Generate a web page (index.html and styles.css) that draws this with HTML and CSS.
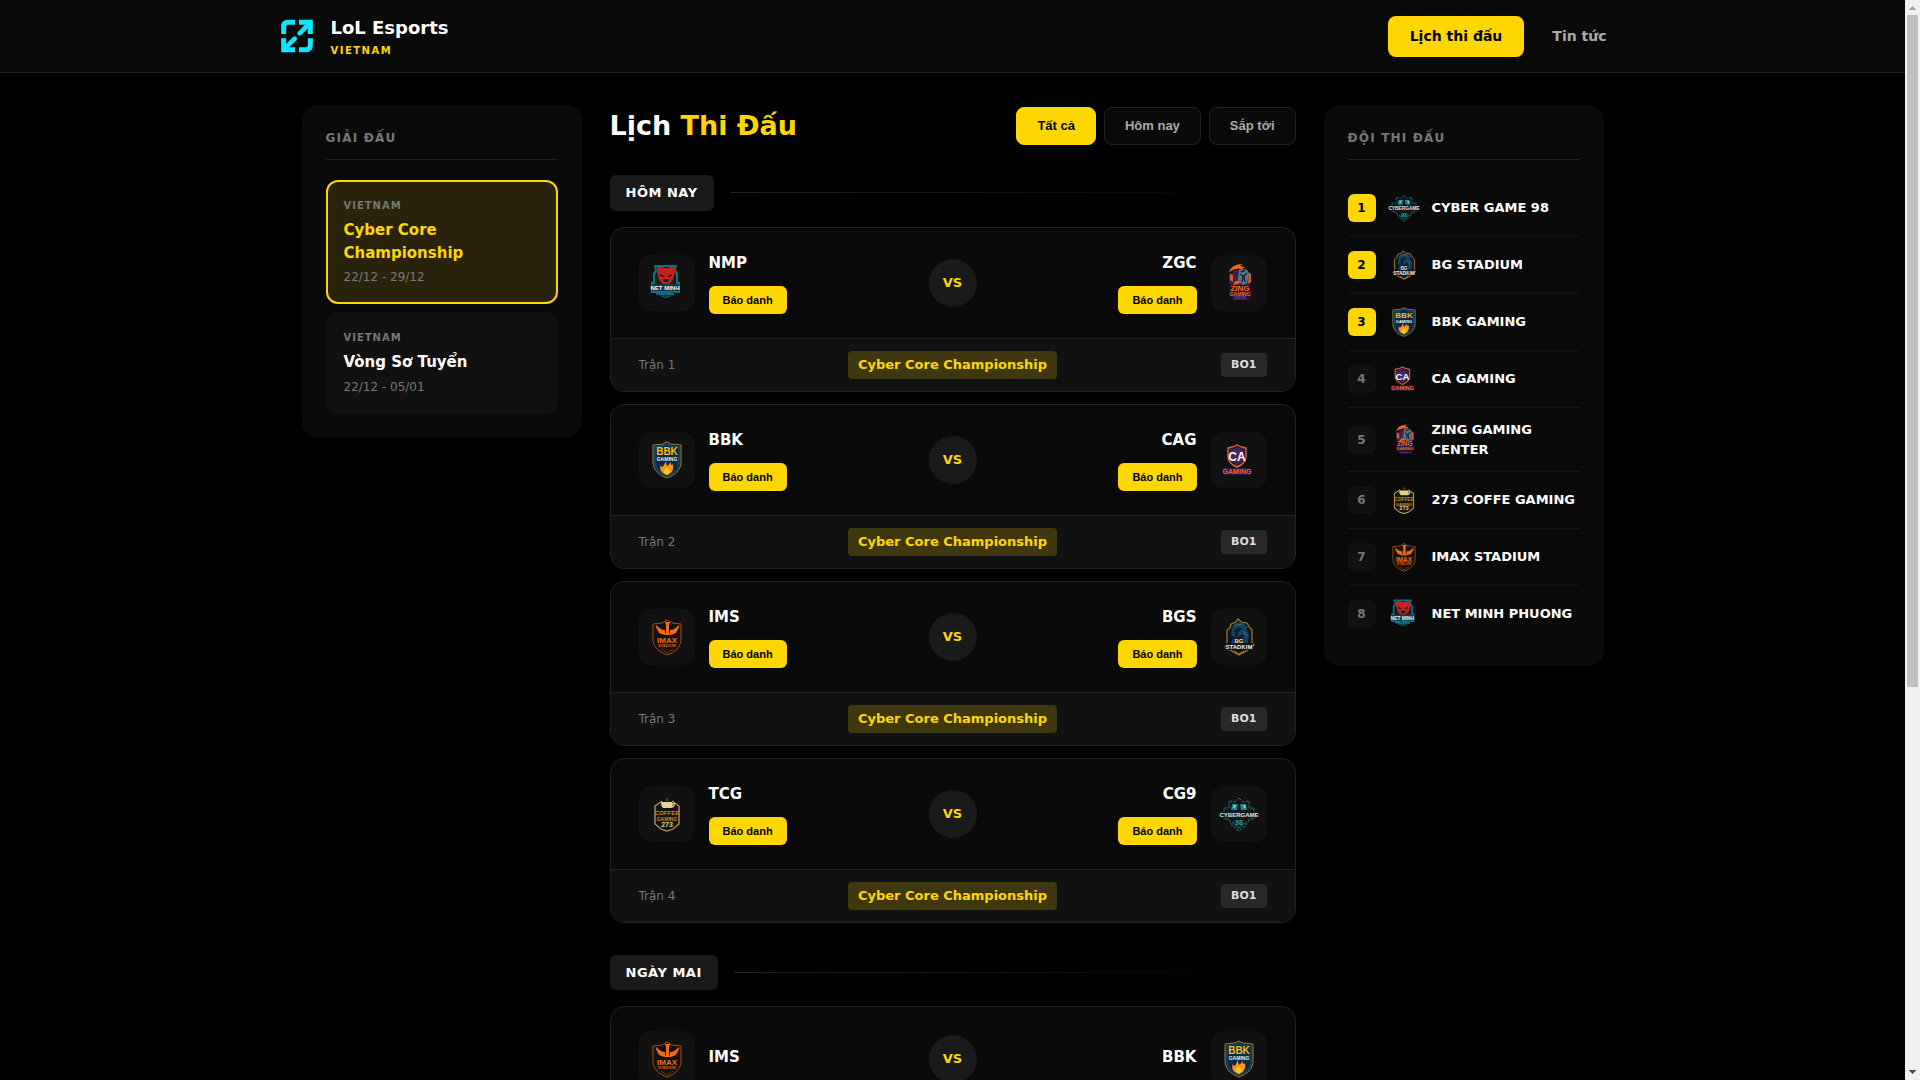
FILE: index.html
```html
<!DOCTYPE html>
<html lang="vi">
<head>
<meta charset="utf-8">
<meta name="viewport" content="width=device-width, initial-scale=1">
<title>LoL Esports Vietnam</title>
<link rel="stylesheet" href="styles.css">
</head>
<body>
<svg class="sprite" aria-hidden="true">
  <symbol id="nmp" viewBox="0 0 40 40">
    <path d="M7 2h23l-1 5 2 3v9h2v11h-7l-2 3-5 2-6-2-2-3H4V19h2v-9l2-3z" fill="#0b7383"/>
    <path d="M9 4h19l-1 4 2 4v9H8v-9l2-4z" fill="#101c2a"/>
    <path d="M10 4h4l4 1h2l4-1h4v5l-2 8-4 4h-6l-4-4-2-8z" fill="#c81f1f"/>
    <path d="M13 11l4 2v1l-4-1zM25 11l-4 2v1l4-1zM16 16h6l-1 3h-4z" fill="#181522"/>
    <path d="M14 19l3 2h4l3-2-1 1h-8z" fill="#842a35"/>
    <path d="M5 21h27v7H5z" fill="#123844"/>
    <path d="M9 29h19v3l-9 2-10-2z" fill="#0d3441"/>
    <text x="18" y="27" font-size="6" fill="#f2f7f8" class="crest">NET MINH</text>
    <text x="18" y="32" font-size="4" fill="#15a0b4" class="crest">PHUONG</text>
  </symbol>
  <symbol id="zgc" viewBox="0 0 40 40">
    <path d="M10 10h4V7h14l4 4v9l-3 3v2l4 2v5l-4 5H15l-5-5v-5l3-3-3-5z" fill="#382151"/>
    <path d="M11 11l3 1v7l-3-2zM30 10l2 1v8l-3 2z" fill="#df5b1c"/>
    <path d="M10 9c2-5 6-8 14-8l-3 2 5 1-3 2c-5-1-8 0-13 3z" fill="#f4641b"/>
    <path d="M20 7c5-3 10 0 10 5l-2 8-4 2-5-5z" fill="#5c7788"/>
    <path d="M21 11l3 2-1 6M28 10l-3 3 1 6M22 9l4-2" fill="none" stroke="#162230" stroke-width="1.4"/>
    <path d="M15 20c2-3 4-3 7 0l-8 2z" fill="#f4641b"/>
    <path d="M12 22h19l2 6v4l-4 4H14l-4-4v-4z" fill="#221433"/>
    <text x="21" y="28" font-size="8" fill="#f26b21" class="crest">ZING</text>
    <text x="21" y="33" font-size="5" fill="#f26b21" class="crest">GAMING</text>
    <text x="21" y="36" font-size="3" fill="#7c4aa5" class="crest">CENTER</text>
  </symbol>
  <symbol id="bbk" viewBox="0 0 40 40">
    <path d="M20 2l4 2 10 1v17c0 8-6 13-14 16C12 35 6 30 6 22V5l10-1z" fill="#082a46" stroke="#a97825"/>
    <path d="M20 4l4 2 8 1v15c0 7-5 11-12 14C13 33 8 29 8 22V7l8-1z" fill="none" stroke="#12577b"/>
    <text x="20" y="15" font-size="10" fill="#f6bd17" class="crest">BBK</text>
    <text x="20" y="21" font-size="5" fill="#e9eef0" class="crest">GAMING</text>
    <path d="M14 24c-1 3 2 4 3 1l2-4c0 5 2 6 3 3l2-2c-1 3 1 4 2 2 1 6-1 9-6 11-6-2-8-5-6-11z" fill="#ff9417"/>
    <path d="M20 27l-3 4 3 3 3-3-1-3-1 2z" fill="#ffd21f"/>
    <path d="M17 33l1-4 2 3 2-4 1 4-3 3z" fill="#ffc41c"/>
  </symbol>
  <symbol id="cag" viewBox="0 0 40 40">
    <path d="M18 5c3 2 6 2 9 3v9c0 5-4 8-9 10-5-2-9-5-9-10V8c3-1 6-1 9-3z" fill="#301949" stroke="#dd641f" stroke-width="1.4"/>
    <path d="M18 8l6 2v7c0 4-2 5-6 7-4-2-6-3-6-7v-7z" fill="#45265b"/>
    <text x="18" y="21" font-size="12" fill="#fff" class="crest">CA</text>
    <path d="M4 28h28v7H4z" fill="#291642"/>
    <text x="18" y="34" font-size="7" fill="#ed652b" class="crest">GAMING</text>
  </symbol>
  <symbol id="ims" viewBox="0 0 40 40">
    <path d="M20 3l5 3 9 1v15c0 8-6 13-14 16C12 35 6 30 6 22V7l9-1z" fill="#15110d" stroke="#a74c12"/>
    <path d="M18 5h5v1l-1 1v9l1 1v1h-5v-1l1-1V7l-1-1z" fill="#f26b16"/>
    <path d="M18 13c-3 0-6-2-9-5 0 2 0 4 2 5h-1l2 2h-1l3 2 4 1zM23 13c3 0 6-2 9-5 0 2 0 4-2 5h1l-2 2h1l-3 2-4 1z" fill="#f26b16"/>
    <text x="20" y="26" font-size="8" fill="#f26b16" class="crest">IMAX</text>
    <text x="20" y="30" font-size="4" fill="#d96015" class="crest">STADIUM</text>
    <path d="M14 32l6 4 6-4" fill="none" stroke="#6d3713"/>
  </symbol>
  <symbol id="bgs" viewBox="0 0 40 40">
    <path d="M12 7l5-2 2-3 3 3 6 1 3 5 2 2v13l2 2-6 5-9 5-9-5-5-3 2-4V13l3-2z" fill="#0c1821" stroke="#a57b24" stroke-width="1.2"/>
    <path d="M13 12l4-6 6-1 6 5-2 2 3 5-1 9H12l3-6-3-2z" fill="#18415e"/>
    <path d="M15 13l5-3 4 2-4 2-2 7 5-4 3 1-5 6h-7l2-5z" fill="#0b2234"/>
    <path d="M14 10l3-3M18 8l6-1M24 14l4 5" stroke="#39718c" fill="none"/>
    <path d="M15 21h10v5h9v7H6v-7h9z" fill="#10171c"/>
    <text x="20" y="26" font-size="6" fill="#e5e5df" class="crest">BG</text>
    <text x="20" y="32" font-size="6" fill="#f3f3ed" class="crest">STADIUM</text>
    <path d="M15 34l5 3 5-3" stroke="#a57b24" fill="none"/>
  </symbol>
  <symbol id="tcg" viewBox="0 0 40 40">
    <path d="M15 7l-7 5v18l6 5 6 2 6-2 6-5V12l-7-5" fill="#15130f" stroke="#b49b64" stroke-width="1.3"/>
    <path d="M14 8h11v1h3c0 4-2 5-5 5h-7c-2-2-2-4-2-6z" fill="#e6d094"/>
    <path d="M19 7c-2-2 2-2 1-4 2 1 1 3 2 4" fill="#673225"/>
    <path d="M26 10l1 1-2 1z" fill="#171717"/>
    <text x="20" y="21" font-size="6" fill="#c88b23" class="crest">COFFEE</text>
    <text x="20" y="27" font-size="5" fill="#c88b23" class="crest">GAMING</text>
    <text x="20" y="33" font-size="7" fill="#dfcb98" class="crest">273</text>
  </symbol>
  <symbol id="cg9" viewBox="0 0 40 40">
    <path d="M20 4l4 4 6-1v7h5v11h-5c-1 5-5 8-10 12-5-4-9-7-10-12H5V14h5V7l6 1z" fill="#091719" stroke="#28747c" stroke-dasharray="3 1"/>
    <path d="M13 10h6l-1 6h-6zM21 10h6l1 6h-6z" fill="#277e89"/>
    <path d="M15 11h2l-1 3h-2zM24 11h2l1 3h-2z" fill="#8cc7cc"/>
    <path d="M13 28l7 6 7-6" stroke="#28747c" fill="none"/>
    <path d="M3 17h34v7H3z" fill="#171b1c"/>
    <text x="20" y="23" font-size="6" fill="#e2e4df" class="crest">CYBERGAME</text>
    <text x="20" y="31" font-size="7" fill="#26a0ae" class="crest">98</text>
  </symbol>
</svg>

<div class="window">
  <div class="page">
    <header class="topbar">
      <div class="topbar-inner">
        <a class="brand" href="#">
          <svg class="brand-icon" viewBox="51 48 120 120" fill="none" stroke="#0fe6ff" stroke-width="15" aria-hidden="true">
            <path d="M71 102V80Q71 67 84 67H105M117 67H151V102M71 115V149H105M117 149H138Q151 149 151 136V115"/>
            <path d="M148 71L119 100M75 145L104 116" stroke-linecap="round" stroke-width="14"/>
            <path d="M133 67h18v18zM71 131v18h18z" fill="#0fe6ff" stroke="none"/>
          </svg>
          <span class="brand-text">
            <span class="brand-name">LoL Esports</span>
            <span class="brand-region">VIETNAM</span>
          </span>
        </a>
        <nav class="nav">
          <a class="nav-link active" href="#">Lịch thi đấu</a>
          <a class="nav-link" href="#">Tin tức</a>
        </nav>
      </div>
    </header>

    <div class="layout">
      <aside class="panel">
        <h2 class="panel-title">GIẢI ĐẤU</h2>
        <div class="leagues">
          <a class="league active" href="#">
            <span class="league-region">VIETNAM</span>
            <span class="league-name">Cyber Core Championship</span>
            <span class="league-date">22/12 - 29/12</span>
          </a>
          <a class="league" href="#">
            <span class="league-region">VIETNAM</span>
            <span class="league-name">Vòng Sơ Tuyển</span>
            <span class="league-date">22/12 - 05/01</span>
          </a>
        </div>
      </aside>

      <main class="schedule">
        <div class="schedule-head">
          <h1 class="title">Lịch <span class="accent">Thi Đấu</span></h1>
          <div class="filters">
            <button class="filter active" type="button">Tất cả</button>
            <button class="filter" type="button">Hôm nay</button>
            <button class="filter" type="button">Sắp tới</button>
          </div>
        </div>

        <section class="day">
          <div class="day-head"><h2 class="day-label">HÔM NAY</h2></div>
          <div class="matches">
            <article class="match">
              <div class="match-body">
                <div class="team">
                  <span class="team-logo"><svg class="logo"><use href="#nmp"/></svg></span>
                  <div class="team-info"><h3 class="team-code">NMP</h3><button class="checkin" type="button">Báo danh</button></div>
                </div>
                <span class="versus">VS</span>
                <div class="team away">
                  <span class="team-logo"><svg class="logo"><use href="#zgc"/></svg></span>
                  <div class="team-info"><h3 class="team-code">ZGC</h3><button class="checkin" type="button">Báo danh</button></div>
                </div>
              </div>
              <footer class="match-foot"><span class="match-no">Trận 1</span><span class="match-league">Cyber Core Championship</span><span class="match-format">BO1</span></footer>
            </article>
            <article class="match">
              <div class="match-body">
                <div class="team">
                  <span class="team-logo"><svg class="logo"><use href="#bbk"/></svg></span>
                  <div class="team-info"><h3 class="team-code">BBK</h3><button class="checkin" type="button">Báo danh</button></div>
                </div>
                <span class="versus">VS</span>
                <div class="team away">
                  <span class="team-logo"><svg class="logo"><use href="#cag"/></svg></span>
                  <div class="team-info"><h3 class="team-code">CAG</h3><button class="checkin" type="button">Báo danh</button></div>
                </div>
              </div>
              <footer class="match-foot"><span class="match-no">Trận 2</span><span class="match-league">Cyber Core Championship</span><span class="match-format">BO1</span></footer>
            </article>
            <article class="match">
              <div class="match-body">
                <div class="team">
                  <span class="team-logo"><svg class="logo"><use href="#ims"/></svg></span>
                  <div class="team-info"><h3 class="team-code">IMS</h3><button class="checkin" type="button">Báo danh</button></div>
                </div>
                <span class="versus">VS</span>
                <div class="team away">
                  <span class="team-logo"><svg class="logo"><use href="#bgs"/></svg></span>
                  <div class="team-info"><h3 class="team-code">BGS</h3><button class="checkin" type="button">Báo danh</button></div>
                </div>
              </div>
              <footer class="match-foot"><span class="match-no">Trận 3</span><span class="match-league">Cyber Core Championship</span><span class="match-format">BO1</span></footer>
            </article>
            <article class="match">
              <div class="match-body">
                <div class="team">
                  <span class="team-logo"><svg class="logo"><use href="#tcg"/></svg></span>
                  <div class="team-info"><h3 class="team-code">TCG</h3><button class="checkin" type="button">Báo danh</button></div>
                </div>
                <span class="versus">VS</span>
                <div class="team away">
                  <span class="team-logo"><svg class="logo"><use href="#cg9"/></svg></span>
                  <div class="team-info"><h3 class="team-code">CG9</h3><button class="checkin" type="button">Báo danh</button></div>
                </div>
              </div>
              <footer class="match-foot"><span class="match-no">Trận 4</span><span class="match-league">Cyber Core Championship</span><span class="match-format">BO1</span></footer>
            </article>
          </div>
        </section>

        <section class="day">
          <div class="day-head"><h2 class="day-label">NGÀY MAI</h2></div>
          <div class="matches">
            <article class="match">
              <div class="match-body">
                <div class="team">
                  <span class="team-logo"><svg class="logo"><use href="#ims"/></svg></span>
                  <div class="team-info"><h3 class="team-code">IMS</h3></div>
                </div>
                <span class="versus">VS</span>
                <div class="team away">
                  <span class="team-logo"><svg class="logo"><use href="#bbk"/></svg></span>
                  <div class="team-info"><h3 class="team-code">BBK</h3></div>
                </div>
              </div>
            </article>
          </div>
        </section>
      </main>

      <aside class="panel">
        <h2 class="panel-title">ĐỘI THI ĐẤU</h2>
        <ol class="ranking">
          <li class="rank-row"><span class="rank top">1</span><svg class="logo small"><use href="#cg9"/></svg><span class="rank-name">CYBER GAME 98</span></li>
          <li class="rank-row"><span class="rank top">2</span><svg class="logo small"><use href="#bgs"/></svg><span class="rank-name">BG STADIUM</span></li>
          <li class="rank-row"><span class="rank top">3</span><svg class="logo small"><use href="#bbk"/></svg><span class="rank-name">BBK GAMING</span></li>
          <li class="rank-row"><span class="rank">4</span><svg class="logo small"><use href="#cag"/></svg><span class="rank-name">CA GAMING</span></li>
          <li class="rank-row"><span class="rank">5</span><svg class="logo small"><use href="#zgc"/></svg><span class="rank-name">ZING GAMING CENTER</span></li>
          <li class="rank-row"><span class="rank">6</span><svg class="logo small"><use href="#tcg"/></svg><span class="rank-name">273 COFFE GAMING</span></li>
          <li class="rank-row"><span class="rank">7</span><svg class="logo small"><use href="#ims"/></svg><span class="rank-name">IMAX STADIUM</span></li>
          <li class="rank-row"><span class="rank">8</span><svg class="logo small"><use href="#nmp"/></svg><span class="rank-name">NET MINH PHUONG</span></li>
        </ol>
      </aside>
    </div>
  </div>

  <div class="scrollbar" aria-hidden="true">
    <svg class="scroll-arrow" viewBox="0 0 15 15"><path d="M4 10h7v-1h-1v-1h-1v-1h-1v-1h-1v1h-1v1h-1v1h-1z" fill="#a3a3a3"/></svg>
    <div class="scroll-track"><div class="scroll-thumb"></div></div>
    <svg class="scroll-arrow" viewBox="0 0 15 15"><path d="M4 5h7v1h-1v1h-1v1h-1v1h-1v-1h-1v-1h-1v-1h-1z" fill="#505050"/></svg>
  </div>
</div>
</body>
</html>
```
FILE: styles.css
```css
:root {
  --gold: #ffd700;
  --surface: #0a0a0a;
  --raised: #111;
  --chip: #1a1a1a;
  --line: #222;
  --muted: #777;
}

* { box-sizing: border-box; margin: 0; padding: 0; }

body {
  background: #000;
  color: #fff;
  font: 16px/1.5 "DejaVu Sans", sans-serif;
}

a { color: inherit; text-decoration: none; }
button { font-family: "Liberation Sans", Arial, sans-serif; cursor: pointer; }
ol { list-style: none; }

.sprite { display: none; }
.crest {
  font-family: "Liberation Sans Narrow", "Liberation Sans", sans-serif;
  font-weight: 700;
  text-anchor: middle;
}

/* Window: scrolling page with its own scrollbar */
.window { display: flex; height: 100vh; }
.page { flex: 1; min-width: 0; overflow-y: auto; scrollbar-width: none; }

.scrollbar {
  display: flex;
  flex-direction: column;
  width: 15px;
  background: #f0f0f0;
}
.scroll-arrow { display: block; width: 15px; height: 15px; }
.scroll-track { flex: 1; padding: 0 2px; }
.scroll-thumb { height: 64%; background: #c0c0c0; }

/* Header */
.topbar { background: var(--surface); border-bottom: 1px solid var(--line); }
.topbar-inner {
  display: flex;
  align-items: center;
  justify-content: space-between;
  max-width: 1400px;
  min-height: 72px;
  margin: 0 auto;
  padding: 0 24px;
}
.brand { display: flex; align-items: center; gap: 14px; }
.brand-icon { width: 40px; height: 40px; }
.brand-text { display: flex; flex-direction: column; }
.brand-name { font-size: 18px; font-weight: 700; line-height: 30px; }
.brand-region {
  color: var(--gold);
  font-size: 10px;
  font-weight: 700;
  line-height: 16px;
  letter-spacing: 0.15em;
}
.nav { display: flex; gap: 6px; }
.nav-link {
  padding: 10px 22px;
  border-radius: 8px;
  color: #aaa;
  font-size: 14px;
  font-weight: 700;
}
.nav-link.active { background: var(--gold); color: #000; }

/* Three-column layout */
.layout {
  display: grid;
  grid-template-columns: 280px minmax(0, 1fr) 280px;
  align-items: start;
  gap: 28px;
  max-width: 1302px;
  margin: 0 auto;
  padding: 32px 0;
}

.panel { padding: 24px; border-radius: 16px; background: var(--surface); }
.panel-title {
  margin-bottom: 20px;
  padding-bottom: 12px;
  border-bottom: 1px solid var(--line);
  color: var(--muted);
  font-size: 12px;
  letter-spacing: 0.1em;
}

/* Leagues */
.leagues { display: flex; flex-direction: column; gap: 8px; }
.league {
  display: flex;
  flex-direction: column;
  padding: 16px;
  border: 2px solid transparent;
  border-radius: 12px;
  background: var(--raised) border-box;
}
.league.active { border-color: var(--gold); background: #29230c; }
.league-region {
  margin-bottom: 6px;
  color: var(--muted);
  font-size: 10px;
  font-weight: 700;
  letter-spacing: 0.1em;
}
.league-name { margin-bottom: 4px; font-size: 15px; font-weight: 700; }
.league.active .league-name { color: var(--gold); }
.league-date { color: var(--muted); font-size: 12px; }

/* Schedule */
.schedule-head {
  display: flex;
  align-items: center;
  justify-content: space-between;
  margin-bottom: 28px;
}
.title { font-size: 27px; line-height: 42px; }
.accent { color: var(--gold); }
.filters { display: flex; gap: 8px; }
.filter {
  padding: 10px 20px;
  border: 1px solid var(--line);
  border-radius: 8px;
  background: var(--surface);
  color: #aaa;
  font-size: 13px;
  font-weight: 700;
  line-height: 16px;
}
.filter.active { border-color: var(--gold); background: var(--gold); color: #000; }

.day { margin-bottom: 32px; }
.day-head { display: flex; align-items: center; gap: 16px; margin-bottom: 16px; }
.day-head::after {
  content: "";
  flex: 1;
  height: 1px;
  background: linear-gradient(90deg, var(--line), transparent);
}
.day-label {
  padding: 8px 16px;
  border-radius: 6px;
  background: var(--chip);
  font-size: 13px;
  letter-spacing: 0.04em;
}
.matches { display: flex; flex-direction: column; gap: 12px; }
.match {
  overflow: hidden;
  border: 1px solid var(--line);
  border-radius: 14px;
  background: var(--surface);
}
.match-body {
  display: grid;
  grid-template-columns: 1fr auto 1fr;
  align-items: center;
  padding: 24px 28px;
}
.team { display: flex; align-items: center; gap: 14px; }
.team.away { flex-direction: row-reverse; text-align: right; }
.team-logo {
  display: grid;
  place-items: center;
  width: 56px;
  height: 56px;
  border-radius: 12px;
  background: var(--raised);
}
.logo { display: block; flex: none; width: 40px; height: 40px; }
.logo.small { width: 32px; height: 32px; }
.team-info { display: flex; flex-direction: column; gap: 8px; }
.team-code { margin-bottom: 4px; font-size: 15px; line-height: 22px; }
.checkin {
  padding: 6px 14px;
  border: 0;
  border-radius: 6px;
  background: var(--gold);
  color: #000;
  font-size: 11px;
  font-weight: 700;
  line-height: 16px;
}
.versus {
  display: grid;
  place-items: center;
  width: 48px;
  height: 48px;
  border-radius: 50%;
  background: var(--chip);
  color: var(--gold);
  font-size: 13px;
  font-weight: 700;
}
.match-foot {
  display: grid;
  grid-template-columns: 1fr auto 1fr;
  align-items: center;
  padding: 12px 28px;
  border-top: 1px solid var(--line);
  background: var(--raised);
}
.match-no { color: var(--muted); font-size: 12px; }
.match-league {
  padding: 4px 10px;
  border-radius: 4px;
  background: #3f370d;
  color: var(--gold);
  font-size: 13px;
  font-weight: 700;
  line-height: 20px;
}
.match-format {
  justify-self: end;
  padding: 4px 10px;
  border-radius: 4px;
  background: #282828;
  color: #ddd;
  font-size: 11px;
  font-weight: 700;
  line-height: 16px;
}

/* Team ranking */
.rank-row {
  display: flex;
  align-items: center;
  gap: 12px;
  padding: 12px 0;
  border-bottom: 1px solid #161616;
}
.rank-row:last-child { border-bottom: 0; }
.rank {
  display: grid;
  flex: none;
  place-items: center;
  width: 28px;
  height: 28px;
  border-radius: 6px;
  background: var(--raised);
  color: var(--muted);
  font-size: 12px;
  font-weight: 700;
}
.rank.top { background: var(--gold); color: #000; }
.rank-name { font-size: 13px; font-weight: 700; }
```
